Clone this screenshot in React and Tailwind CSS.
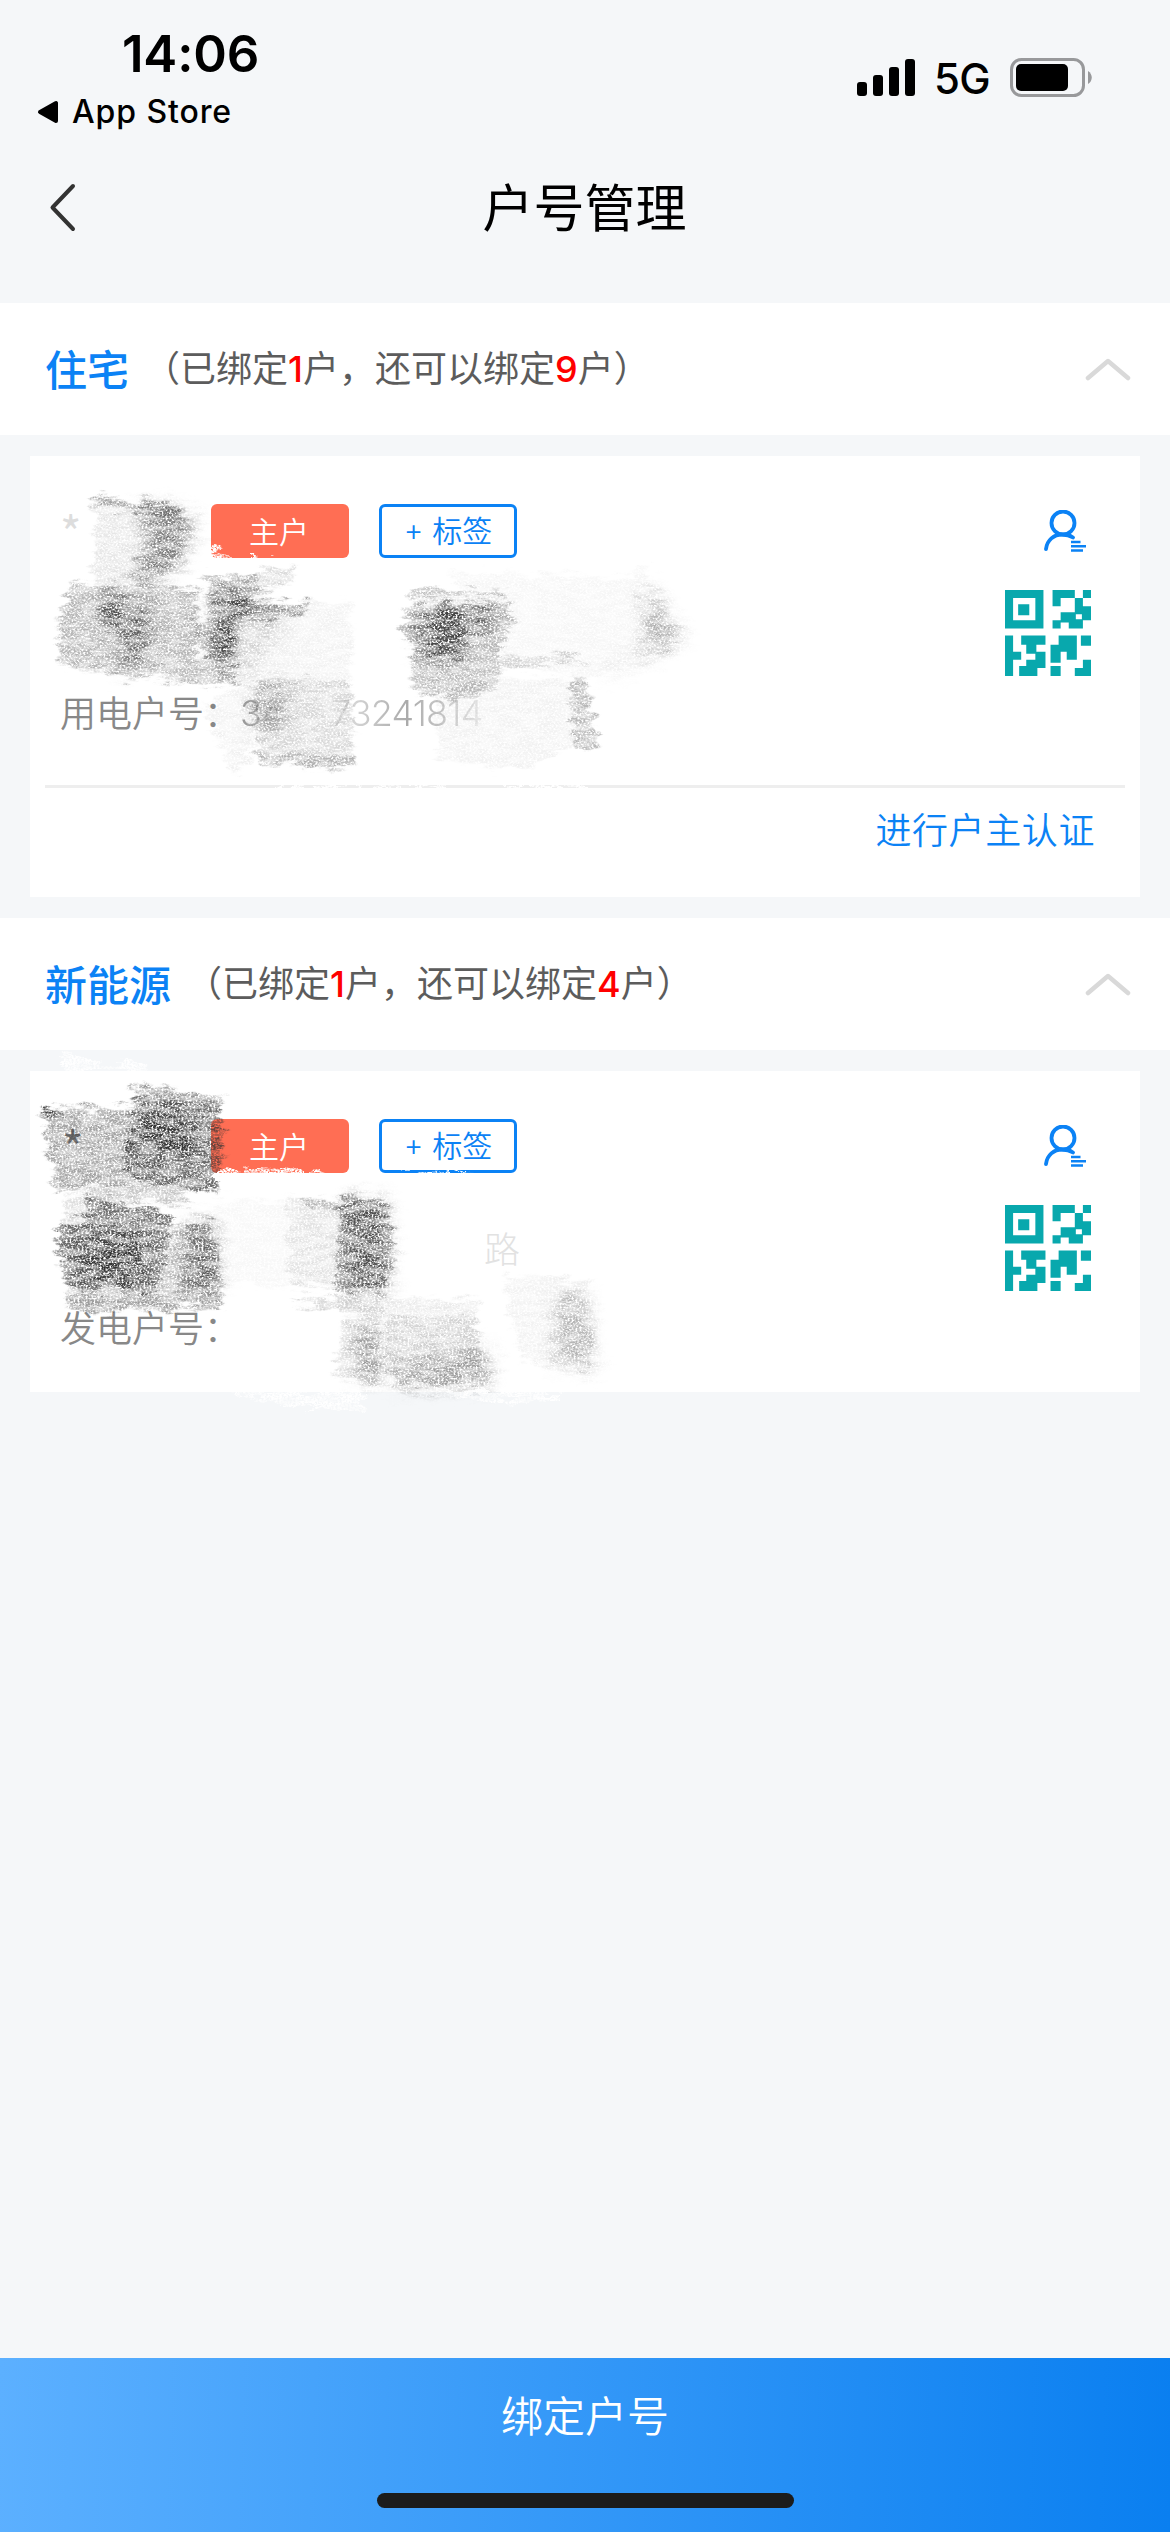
import clsx from "clsx";

const SECTIONS = [
  {
    name: "住宅",
    bound: 1,
    left: 9,
    label: "用电户号：",
    number: "34",
    rest: "73241814",
    verify: true,
  },
  {
    name: "新能源",
    bound: 1,
    left: 4,
    label: "发电户号：",
    verify: false,
  },
];

const QR_PATH =
  "M0 0h38v38H0zM8 8v22h22V8zM13 14h11v11H13zM47 0h22v8H55v8h-8zM77 0h8v8h-8zM69 8h8v8h8v14h-8v8H63v-6h-8v6h-8v-8h8v-8h14zM70 24v5h6v-5zM0 45h8v16h8v8H8v16H0zM16 45h24v9h-9v7h9v16h-8v8H14v-10h7v-6h9v-6h-9v-9h-5zM53 45h18v24h-10v-8h-6v11H45V54h8zM75 45h10v10H75zM77 69h8v16H69v-8h8zM45 75h10v10H45z";

function StatusBar() {
  return (
    <div className="flex h-[150px] justify-between font-['Inter',sans-serif] text-black">
      <div className="pt-[28px]">
        <div className="pl-[122px] text-[51px] leading-[52px] font-semibold tracking-[-0.2px]">14:06</div>
        <div className="flex items-center pt-[12px] pl-[37px]">
          <svg width="22" height="24" viewBox="0 0 22 24">
            <path d="M3 12L19 3v18z" stroke="#000" strokeWidth="4" strokeLinejoin="round" />
          </svg>
          <span className="pl-[13px] text-[32px] leading-[40px] font-medium tracking-[0.9px]">App Store</span>
        </div>
      </div>
      <div className="mt-[58px] flex h-[40px] items-center pr-[78px]">
        <svg width="58" height="38" viewBox="0 0 58 38">
          <rect x="0" y="23" width="10" height="14" rx="3" />
          <rect x="16" y="16" width="10" height="21" rx="3" />
          <rect x="32" y="8" width="10" height="29" rx="3" />
          <rect x="48" y="0" width="10" height="37" rx="3" />
        </svg>
        <span className="w-[95px] pt-[2px] pl-[19px] text-[42px] leading-[40px] font-[450] tracking-[-0.6px]">5G</span>
        <svg width="82" height="40" viewBox="0 0 82 40">
          <rect x="1.500" y="1.500" width="72" height="36" rx="10" fill="none" stroke="#98999b" strokeWidth="3" />
          <rect x="6" y="6" width="52" height="27" rx="5" />
          <path d="M78 13c5 3 5 10 0 13z" fill="#98999b" />
        </svg>
      </div>
    </div>
  );
}

function NavBar() {
  return (
    <div className="flex h-[153px] items-start px-[48px] pt-[27px]">
      <svg className="mt-[5px]" width="32" height="50" viewBox="0 0 32 50" fill="none">
        <path d="M25 4L4.500 25.500 25 47" stroke="#333" strokeWidth="4" strokeLinecap="round" strokeLinejoin="round" />
      </svg>
      <h1 className="flex-1 pr-[33px] text-center text-[51px] leading-[56px] text-black">户号管理</h1>
    </div>
  );
}

function SectionHeader({ name, bound, left }) {
  return (
    <div className="flex h-[132px] items-center bg-white pr-[39px] pl-[45px]">
      <span className="pb-[4px] text-[42px] font-medium text-[#0b82f5]">{name}</span>
      <span className="pb-[3px] pl-[15px] text-[36px] text-[#5c5c5c]">
        （已绑定<b className="font-['Inter'] text-[36px] font-medium text-[#f00]">{bound}</b>户，还可以绑定
        <b className="font-['Inter'] text-[36px] font-medium text-[#f00]">{left}</b>户）
      </span>
      <svg className="ml-auto" width="46" height="24" viewBox="0 0 46 24" fill="none">
        <path d="M3 21L23 4l20 17" stroke="#d9d9d9" strokeWidth="4.500" strokeLinecap="round" strokeLinejoin="round" />
      </svg>
    </div>
  );
}

function UserIcon() {
  return (
    <svg width="42" height="42" viewBox="0 0 42 42" fill="none" stroke="#0b82f5">
      <circle cx="19" cy="13" r="11.500" strokeWidth="3.800" />
      <path d="M2 39C3 30 10 24.500 18 24.500c5 0 8 1 11 3" strokeWidth="3.800" strokeLinecap="round" />
      <path d="M27 32h9.500M27 36.200h15M27 40.500h12" strokeWidth="2.600" />
    </svg>
  );
}

// rough pencil look: wobbly outline, uneven pressure, paper grain
function PencilFilter({ id, seed }) {
  return (
    <filter id={id} x="-10%" y="-10%" width="120%" height="120%" colorInterpolationFilters="sRGB">
      <feTurbulence type="fractalNoise" baseFrequency="0.05 0.16" numOctaves="3" seed={seed} result="wave" />
      <feDisplacementMap in="SourceGraphic" in2="wave" scale="22" xChannelSelector="R" yChannelSelector="G" result="shape" />
      <feColorMatrix in="wave" values="0 0 0 0 1  0 0 0 0 1  0 0 0 0 1  0 0 4 0 -1.400" result="pressure" />
      <feTurbulence type="fractalNoise" baseFrequency="0.5 0.55" numOctaves="4" seed={seed + 4} />
      <feColorMatrix values="0 0 0 0 0  0 0 0 0 0  0 0 0 0 0  3 1 0 0 -1.300" result="grain" />
      <feComposite in="shape" in2="grain" operator="in" result="grained" />
      <feComposite in="grained" in2="pressure" operator="arithmetic" k1="0.6" k2="0.7" />
    </filter>
  );
}

function Shades({ items }) {
  return items.map(([points, opacity, soft], i) => (
    <polygon
      key={i}
      points={points}
      fillOpacity={opacity}
      className={soft ? "blur-[8px]" : "blur-[1.5px]"}
    />
  ));
}

const HOME_SHADES = [
  ["94,495 187,510 192,530 178,567 163,583 91,583 96,517", 0.1],
  ["94,495 187,510 187,520 94,504", 0.3],
  ["140,505 190,512 192,535 174,570 150,582 126,579 148,550", 0.5, true],
  ["71,583 199,587 195,660 165,655 154,680 60,665 58,622", 0.3],
  ["160,656 212,660 212,683 163,683", 0.28],
  ["108,590 150,612 145,655 118,672 128,640 95,618", 0.6, true],
  ["203,578 257,575 261,593 238,605 210,600", 0.36],
  ["212,597 306,603 306,615 243,620", 0.4],
  ["196,620 232,618 239,683 210,687 212,660 196,640", 0.36],
  ["257,572 292,567 295,578 261,593", 0.16],
  ["216,595 260,600 235,620 232,665 212,660", 0.8, true],
  ["234,600 350,603 350,687 234,683", 0.05],
  ["232,605 290,612 270,650 240,680", 0.14, true],
  ["408,590 502,590 500,597 408,596", 0.25],
  ["413,602 510,604 516,623 500,640 500,680 475,697 417,693 408,640 399,630", 0.28],
  ["424,608 500,612 462,636 468,657 420,657", 0.9, true],
  ["453,573 631,578 631,567 645,565 667,617 681,640 596,678 502,667", 0.04],
  ["502,658 570,656 590,662 502,668", 0.16],
  ["645,590 655,590 667,617 683,640 600,678 645,650", 0.32, true],
  ["252,680 350,680 353,767 259,763", 0.16],
  ["254,682 290,682 285,730 256,735", 0.3, true],
  ["259,754 353,757 353,768 259,763", 0.2],
  ["202,705 252,682 252,755 235,775", 0.06],
  ["431,683 587,677 598,747 574,745 518,770 440,760", 0.05],
  ["569,677 587,677 598,747 576,747", 0.25],
];

const ENERGY_SHADES = [
  ["42,1108 134,1107 134,1183 54,1193 47,1140", 0.34],
  ["42,1108 60,1108 60,1117 42,1117", 0.6],
  ["132,1085 221,1098 221,1104 132,1092", 0.4],
  ["138,1096 221,1104 223,1140 219,1192 129,1180 125,1140", 0.56],
  ["142,1115 185,1110 195,1150 150,1165", 0.7, true],
  ["67,1197 143,1180 187,1187 192,1207 130,1200", 0.22],
  ["66,1198 90,1198 87,1225 66,1225", 0.13],
  ["87,1195 172,1215 170,1250 154,1293 69,1290 58,1253 58,1225 85,1223", 0.56],
  ["75,1235 145,1235 140,1290 80,1280", 0.5, true],
  ["174,1223 214,1223 225,1297 180,1297 150,1290 172,1253", 0.26],
  ["190,1222 214,1222 218,1290 182,1290", 0.5, true],
  ["67,1293 225,1296 219,1307 89,1312 67,1307", 0.36],
  ["217,1200 339,1198 339,1288 217,1285", 0.03],
  ["285,1199 350,1200 345,1288 290,1285", 0.08],
  ["300,1200 350,1200 350,1212 300,1204", 0.2],
  ["342,1198 384,1198 395,1240 385,1295 333,1288", 0.34],
  ["345,1200 386,1200 388,1292 350,1290", 0.5, true],
  ["292,1297 384,1295 384,1317 300,1305", 0.16],
  ["345,1317 380,1317 380,1383 335,1377", 0.1],
  ["354,1325 380,1325 384,1382 354,1376", 0.32, true],
  ["386,1298 478,1300 476,1315 386,1314", 0.08],
  ["386,1316 475,1316 487,1385 393,1385 386,1357", 0.17],
  ["395,1365 490,1345 490,1388 395,1388", 0.25, true],
  ["504,1275 594,1280 585,1307 592,1368 522,1363", 0.05],
  ["556,1295 588,1295 594,1370 556,1364", 0.26, true],
];

function HomeScribble() {
  return (
    <svg className="absolute inset-0 size-full overflow-visible" viewBox="30 456 1110 441" fill="#444">
      <PencilFilter id="pencil-home" seed={3} />
      <g filter="url(#pencil-home)">
        <Shades items={HOME_SHADES} />
        <path d="M211 547l10 2 9 10-20 6zM254 558l18-1 2 4h-20z" fill="#fff" />
        <path d="M274 787h170M505 787h80" stroke="#fff" strokeWidth="4" fill="none" />
      </g>
    </svg>
  );
}

function EnergyScribble() {
  return (
    <svg className="absolute inset-0 size-full overflow-visible" viewBox="30 1071 1110 321" fill="#333">
      <PencilFilter id="pencil-energy" seed={9} />
      <g filter="url(#pencil-energy)">
        <Shades items={ENERGY_SHADES} />
        <g fill="#fff">
          <path d="M58 1056l92 10v6H66zM225 1391h141l-2 20-82-5zM430 1391h130v12l-74-2z" fillOpacity="0.8" />
          <path d="M211 1171l34 1 2-6 84 8v8H211zM379 1171l94 1v3h-92z" />
        </g>
      </g>
    </svg>
  );
}

function AccountCard({ section }) {
  const { label, number, rest, verify } = section;
  return (
    <div className={clsx("relative mx-[30px] my-[21px] bg-white", verify ? "h-[441px]" : "h-[321px]")}>
      <div className="flex h-[329px] justify-between pr-[49px] pl-[30px]">
        <div>
          <div className="mt-[48px] flex h-[54px] items-center">
            <span
              className={clsx(
                "w-[151px] text-[46px] leading-[54px]",
                verify ? "text-[#ddd]" : "pl-[2px] text-[#777]"
              )}
            >
              *
            </span>
            <span className="flex h-[54px] w-[138px] items-center justify-center rounded-[6px] bg-[#ff6e54] pr-[2px] pb-[2px] text-[30px] font-[350] text-white">
              主户
            </span>
            <span className="ml-[30px] flex h-[54px] w-[138px] items-center justify-center gap-[9px] rounded-[6px] border-[3px] border-[#0b82f5] pb-[3px] text-[30px] font-[350] text-[#0b82f5]">
              <span className="pt-[2px] font-['Inter'] text-[30px] font-light">+</span>
              标签
            </span>
          </div>
          <div className="mt-[47px] h-[54px] pl-[424px] text-[36px] leading-[54px] font-light text-[#e2e2e2]">
            {verify ? "" : "路"}
          </div>
          <div className="mt-[25px] flex h-[54px] items-center text-[36px] font-[350] text-[#888]">
            <span className="w-[180px]">{label}</span>
            {number && (
              <span className="flex pt-[3px] font-['Inter'] text-[36px] font-light tracking-[-0.8px] text-[#a5a5a5]">
                <span className="w-[91px] bg-linear-to-r from-[#999] to-[#fff] to-50% bg-clip-text text-transparent">
                  {number}
                </span>
                <span className="bg-linear-to-r from-[#e8e8e8] via-[#aaa] to-[#eee] bg-clip-text text-transparent">
                  {rest}
                </span>
              </span>
            )}
          </div>
        </div>
        <div className="flex flex-col items-end pt-[54px]">
          <div className="pr-[5px]">
            <UserIcon />
          </div>
          <svg className="mt-[38px]" width="86" height="86" viewBox="0 0 85 85" fill="#08a8ad" fillRule="evenodd">
            <path d={QR_PATH} />
          </svg>
        </div>
      </div>
      {verify && (
        <div className="mx-[15px] flex h-[90px] items-center justify-end border-t-[3px] border-[#eee] pr-[30px] pb-[7px] text-[36px] font-[350] tracking-[0.6px] text-[#0b82f5]">
          进行户主认证
        </div>
      )}
      {verify ? <HomeScribble /> : <EnergyScribble />}
    </div>
  );
}

export default function App() {
  return (
    <div className="flex h-[2532px] w-[1170px] flex-col overflow-hidden bg-[#f5f7f9] font-['Noto_Sans_CJK_SC',sans-serif]">
      <StatusBar />
      <NavBar />
      {SECTIONS.map((section) => (
        <section key={section.name}>
          <SectionHeader {...section} />
          <AccountCard section={section} />
        </section>
      ))}
      <footer className="mt-auto flex h-[174px] flex-col items-center justify-between bg-linear-[92deg] from-[#5cb0ff] to-[#0a7ff0] pt-[25px] pb-[24px]">
        <span className="text-[42px] leading-[62px] font-[350] text-white">绑定户号</span>
        <div className="h-[15px] w-[417px] rounded-full bg-[#1c1c1c]" />
      </footer>
    </div>
  );
}
